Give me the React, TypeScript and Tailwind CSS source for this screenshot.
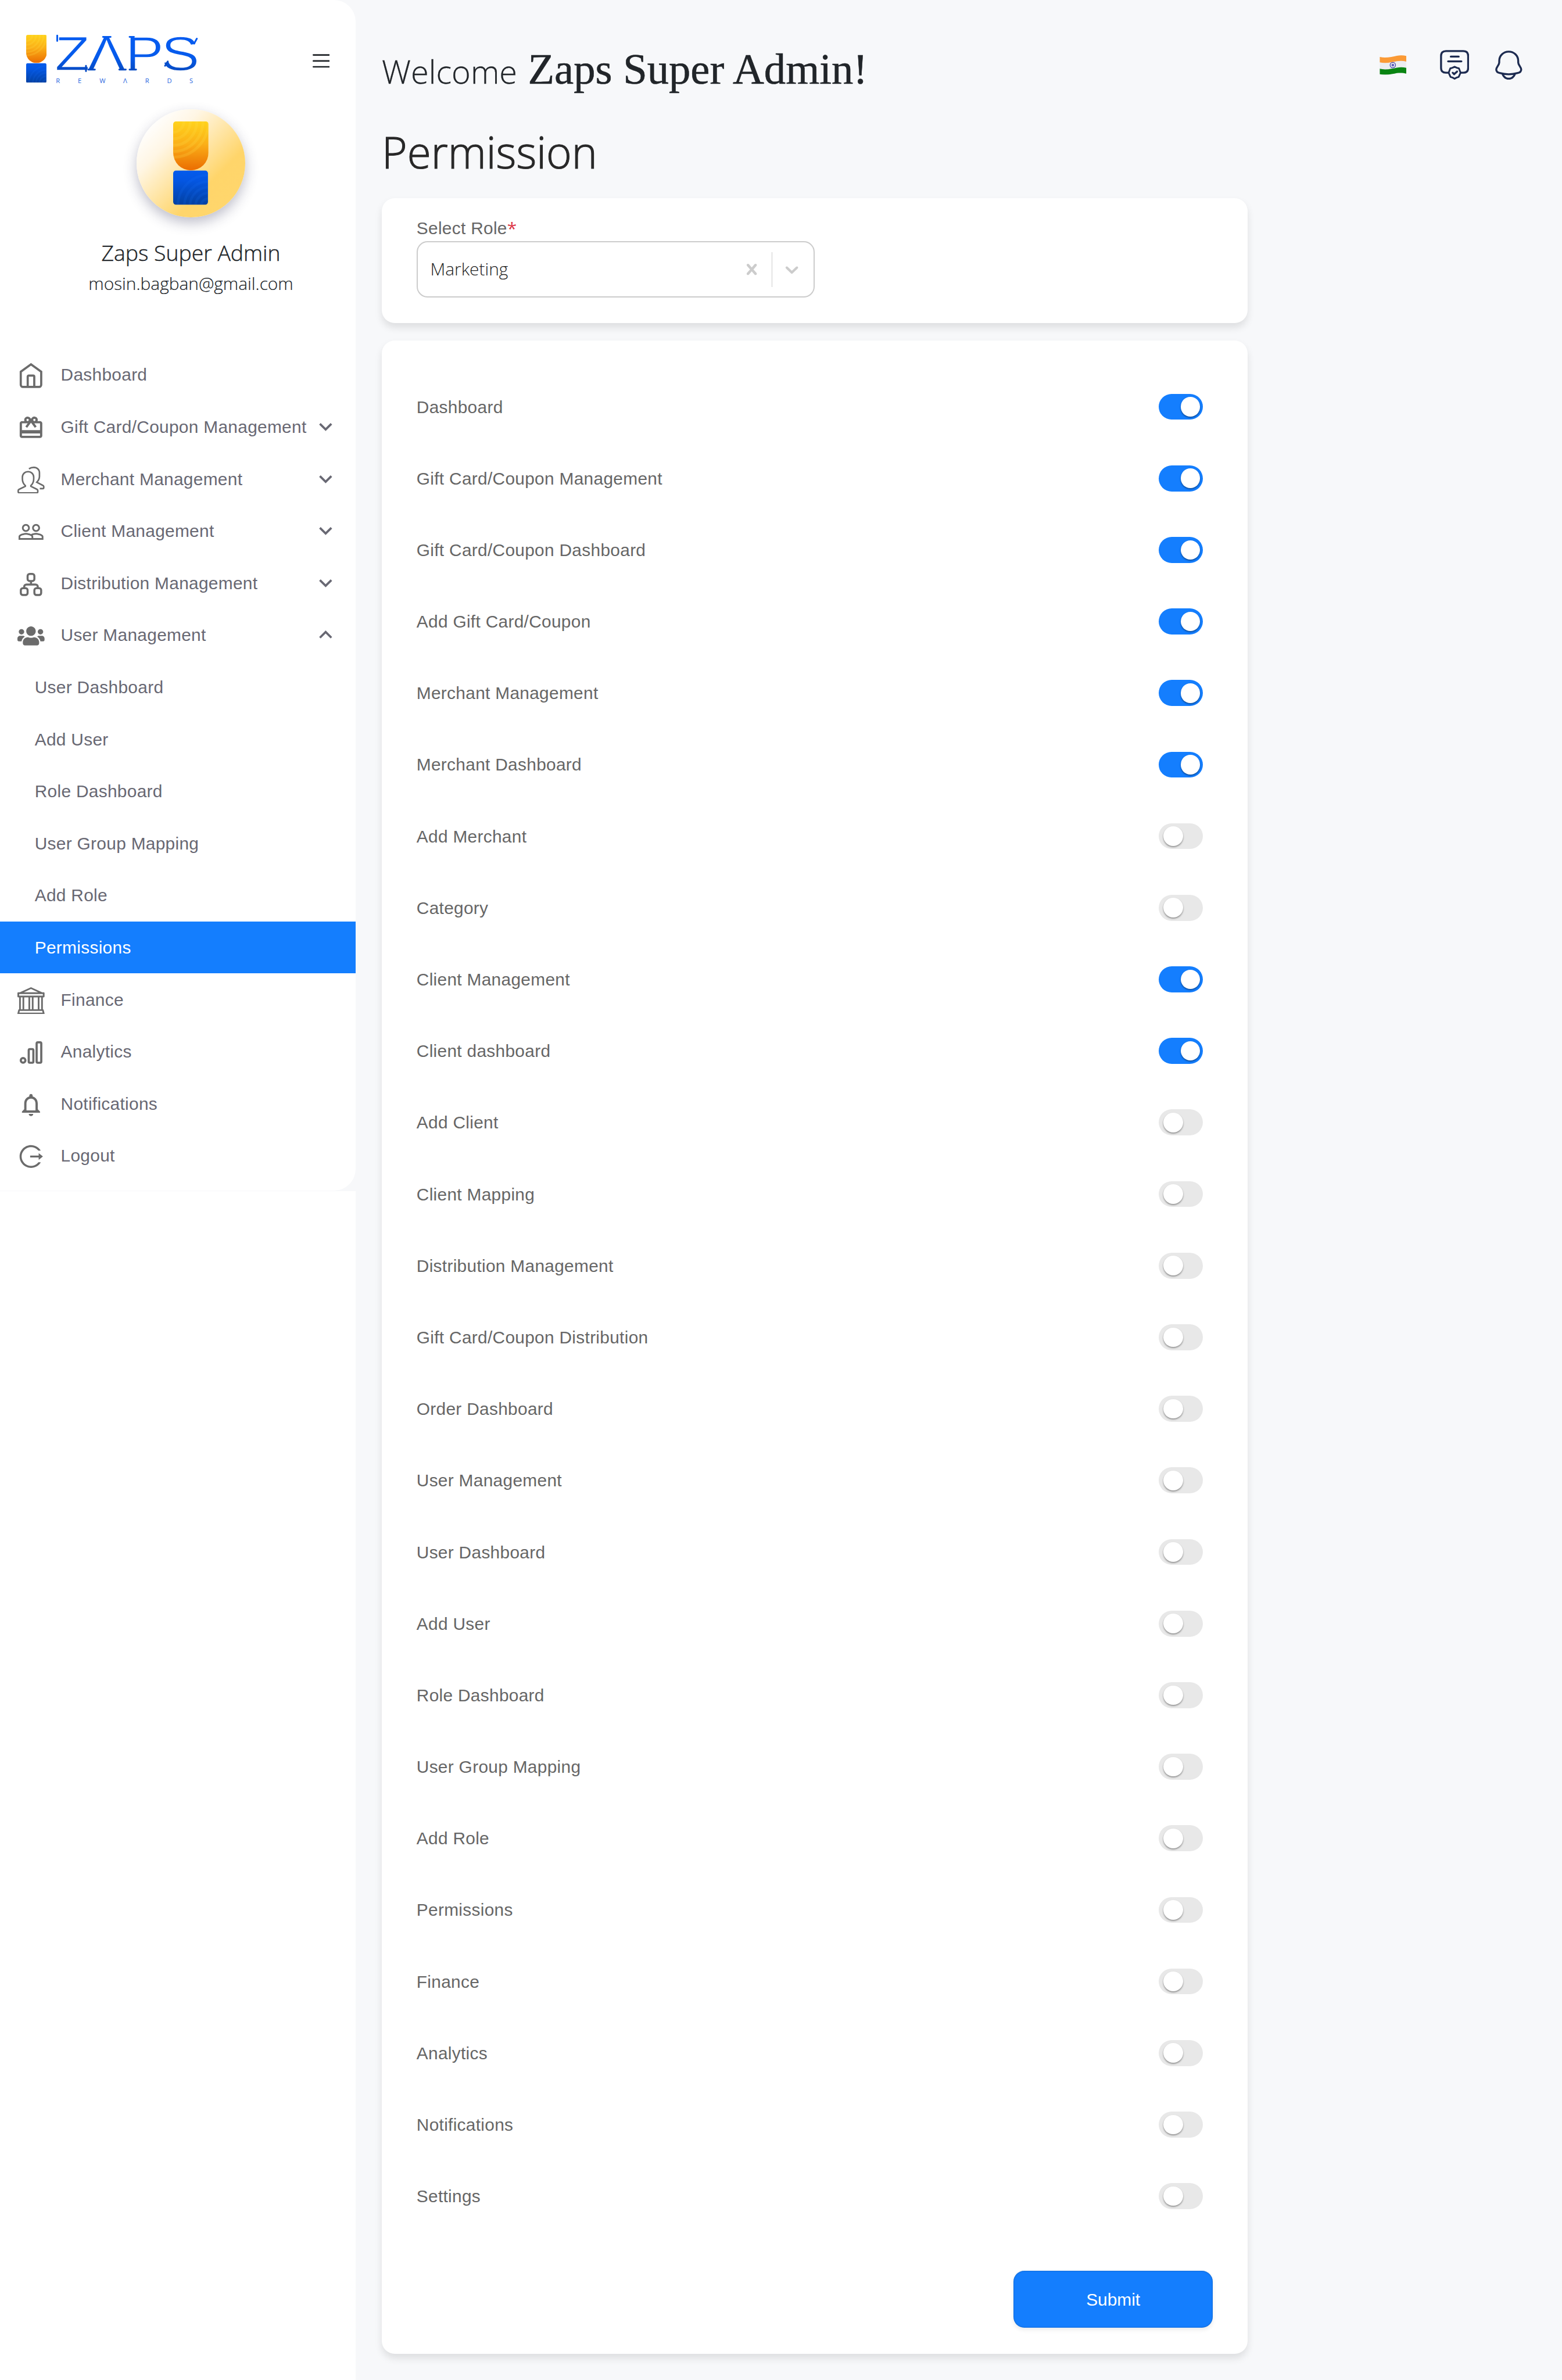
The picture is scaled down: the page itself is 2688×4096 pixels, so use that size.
import React from "react";
import {
  MdCardGiftcard,
  MdPeopleOutline,
  MdNotificationsNone,
  MdKeyboardArrowDown,
  MdKeyboardArrowUp,
} from "react-icons/md";
import { FaUsers } from "react-icons/fa";
import { BsBank } from "react-icons/bs";
import { AiOutlineLogout } from "react-icons/ai";

const HomeIcon = () => (
  <svg viewBox="0 0 24 24" className="size-[25px]" fill="none" stroke="currentColor" strokeWidth="1.9">
    <path d="M12 2.1 21.05 8.6V20.2a1.9 1.9 0 0 1-1.9 1.9H4.85a1.9 1.9 0 0 1-1.9-1.9V8.6Z" />
    <path d="M9.1 22V12.9a.9.9 0 0 1 .9-.9h4a.9.9 0 0 1 .9.9V22" />
  </svg>
);

const MerchantIcon = () => (
  <svg viewBox="0 0 24 24" className="size-[25px]" fill="none" stroke="currentColor" strokeWidth="1.35">
    <path d="M9.4 4.5c-2.9 0-5 2.2-5 4.8V11c0 2.4 1 4.4 2.6 5.8v.6L1.4 20.2a1 1 0 0 0-.7.9v1.4a.8.8 0 0 0 .8.8h15.7a.8.8 0 0 0 .8-.8v-1.4a1 1 0 0 0-.6-.9L11.9 17.4v-.6c1.5-1.4 2.5-3.4 2.5-5.8V9.300c0-2.600-2.100-4.800-5-4.800Z" />
    <path d="M10.2 2c1.2-.9 2.7-1.3 4.3-1.3 2.9 0 5 2.1 5 4.8v3.3c0 2-1 3.700-2.400 5.100l5.500 2.800a1.200 1.200 0 0 1 .7 1v1a.8.8 0 0 1-.8.8h-2.700" />
  </svg>
);

const SitemapIcon = () => (
  <svg viewBox="0 0 24 24" className="size-[25px]" fill="none" stroke="currentColor" strokeWidth="1.8">
    <rect x="9" y="3" width="6" height="6.2" rx="1.8" />
    <rect x="3" y="15.6" width="6" height="6" rx="1.8" />
    <rect x="15" y="15.6" width="6" height="6" rx="1.8" />
    <path d="M12 9.2v3M6 15.6v-1.3a2 2 0 0 1 2-2h8a2 2 0 0 1 2 2v1.3" />
  </svg>
);

const AnalyticsIcon = () => (
  <svg viewBox="0 0 24 24" className="size-[25px]" fill="none" stroke="currentColor" strokeWidth="1.9">
    <circle cx="5" cy="19" r="2.05" />
    <rect x="10" y="9" width="4.1" height="12.1" rx="1" />
    <rect x="17" y="3" width="4.1" height="18.1" rx="1" />
  </svg>
);

/* Brand mark: a rounded amber tile resting on a blue one, both with ripple rings. */
const BrandMark = ({ id, className }: { id: string; className: string }) => (
  <svg viewBox="0 0 38 88.6" preserveAspectRatio="none" className={className}>
    <defs>
      <linearGradient id={`${id}-top`} x1="0" y1="0" x2="0" y2="1">
        <stop offset="0" stopColor="#ffd21c" />
        <stop offset="0.45" stopColor="#fbb018" />
        <stop offset="1" stopColor="#ea6a00" />
      </linearGradient>
      <linearGradient id={`${id}-bottom`} x1="0" y1="0" x2="0" y2="1">
        <stop offset="0" stopColor="#055bec" />
        <stop offset="0.3" stopColor="#0456e2" />
        <stop offset="1" stopColor="#0340a0" />
      </linearGradient>
      <clipPath id={`${id}-ct`}>
        <path d="M3 0h32a3 3 0 0 1 3 3v30a19 19 0 0 1-38 0V3a3 3 0 0 1 3-3Z" />
      </clipPath>
      <clipPath id={`${id}-cb`}>
        <rect x="0" y="52.2" width="37.4" height="36.4" rx="3" />
      </clipPath>
    </defs>
    <g clipPath={`url(#${id}-ct)`}>
      <rect width="38" height="53" fill={`url(#${id}-top)`} />
      <g fill="none" stroke="#ffe14d" strokeOpacity="0.2" strokeWidth="3">
        <circle r="11.5" />
        <circle r="18.5" />
        <circle r="25.5" />
        <circle r="32" />
        <circle r="38" />
      </g>
    </g>
    <g clipPath={`url(#${id}-cb)`}>
      <rect y="52" width="38" height="37" fill={`url(#${id}-bottom)`} />
      <g fill="none" stroke="#1a78ff" strokeOpacity="0.14" strokeWidth="2.8">
        <circle cx="38" cy="90" r="8" />
        <circle cx="38" cy="90" r="14" />
        <circle cx="38" cy="90" r="20" />
        <circle cx="38" cy="90" r="26" />
        <circle cx="38" cy="90" r="33" />
      </g>
    </g>
  </svg>
);

const Logo = () => (
  <div className="flex h-[45px] gap-[9px]">
    <BrandMark id="logo" className="h-[44.3px] w-[19px]" />
    <svg viewBox="0 0 132 45" className="h-[45px] w-[132px] overflow-visible">
      <defs>
        <linearGradient id="word" gradientUnits="userSpaceOnUse" x1="0" y1="-31" x2="0" y2="0">
          <stop offset="0" stopColor="#055bf0" />
          <stop offset="0.6" stopColor="#055bec" />
          <stop offset="1" stopColor="#064bc4" />
        </linearGradient>
      </defs>
      {/* The white outline thins the strokes of the wordmark. */}
      <text
        transform="translate(0 32.8) scale(1.2 1)"
        x="-1.2 23.8 53 80.5"
        fontSize="44.2"
        fontFamily="'Liberation Sans', Arial, sans-serif"
        fill="url(#word)"
        stroke="#ffffff"
        strokeWidth="0.7"
      >
        ZΛPS
      </text>
      {/* Flared terminals of the wordmark. */}
      <g fill="none" strokeWidth="1.6" strokeLinecap="round">
        <path stroke="#055bf0" d="M.8.6v5M43 1.9h7M67.5 1.9h4M129.5 3.5 127 8" />
        <path stroke="#064bc4" d="M27.300 28.500v5M29.500 32h6M58 32h6M67.500 32h6M100.200 28.500l2.500-4" />
      </g>
      <text
        x="-0.4 19.8 39.8 61.6 81.9 102.1 122.7"
        y="44.2"
        fontSize="6"
        fontFamily="'Open Sans', sans-serif"
        fill="#2a67e0"
      >
        REWΛRDS
      </text>
    </svg>
  </div>
);

const FlagIndia = () => (
  <svg viewBox="0 0 50 36" className="h-[18px] w-[25px]">
    <defs>
      <clipPath id="flag">
        <path d="M0.5 3.2C12 6 24 2.5 32 1C38 0 44 0 49.5 1.5V34C44 32.3 38 32.3 32 33C24 34.5 12 38 0.5 35Z" />
      </clipPath>
    </defs>
    <g clipPath="url(#flag)">
      <rect width="50" height="36" fill="#ececf0" />
      <path d="M0 0H50V12C44 10 38 10 32 11C24 12.5 12 16 0 13Z" fill="#fb9a35" />
      <path d="M0 25C12 28 24 24.5 32 23C38 22 44 22 50 23.5V36H0Z" fill="#0a8412" />
    </g>
    <circle cx="24.5" cy="18.3" r="5" fill="none" stroke="#3a37a8" strokeWidth="1.3" />
    <circle cx="24.5" cy="18.3" r="2.6" fill="#3a37a8" fillOpacity="0.75" />
  </svg>
);

const CertificateIcon = () => (
  <svg viewBox="0 0 54 55" className="h-[27.5px] w-[27px]" fill="none" stroke="currentColor" strokeWidth="3.6" strokeLinecap="round" strokeLinejoin="round">
    <path d="M14.5 42H11c-6 0-9-2.8-9-9V11c0-6.2 3-9 9-9h32c6 0 9 2.8 9 9v22c0 6.2-3 9-9 9h-4" />
    <path d="M20 12.2h14.5M15 21h24.5" />
    <path d="m27 31 4 1.8 4 1.2 1.5 4 1.5 4-1.8 4-1.7 3.6-4 1.4-3.5 2-3.5-2-4-1.4-1.7-3.6L16 42l1.5-4 1.5-4 4-1.200Z" strokeWidth="3.2" />
    <path d="m23.5 42 2.5 2.6 5.5-4.8" />
  </svg>
);

const BellIcon = () => (
  <svg viewBox="0 0 50 54" className="h-[27px] w-[25px]" fill="none" stroke="currentColor" strokeWidth="3.6" strokeLinecap="round" strokeLinejoin="round">
    <path d="M25 2C15 2 7.5 9.7 7.5 19v3c0 4.5-5.5 8.5-5.5 13 0 4 3 5.6 6.5 6.5 10.5 2.9 22.5 2.9 33 0C45 40.6 48 39 48 35c0-4.500-5.500-8.500-5.500-13v-3C42.500 9.700 35 2 25 2Z" />
    <path d="M14 44.500c2.500 5 6.500 7.500 11 7.500s8.500-2.500 11-7.500" />
  </svg>
);

type NavEntry = { label: string; icon: React.ReactNode; arrow?: "down" | "up" };

const topNav: NavEntry[] = [
  { label: "Dashboard", icon: <HomeIcon /> },
  { label: "Gift Card/Coupon Management", icon: <MdCardGiftcard size={25} />, arrow: "down" },
  { label: "Merchant Management", icon: <MerchantIcon />, arrow: "down" },
  { label: "Client Management", icon: <MdPeopleOutline size={25} />, arrow: "down" },
  { label: "Distribution Management", icon: <SitemapIcon />, arrow: "down" },
  { label: "User Management", icon: <FaUsers size={25} />, arrow: "up" },
];

const subNav = ["User Dashboard", "Add User", "Role Dashboard", "User Group Mapping", "Add Role", "Permissions"];

const bottomNav: NavEntry[] = [
  { label: "Finance", icon: <BsBank size={25} /> },
  { label: "Analytics", icon: <AnalyticsIcon /> },
  { label: "Notifications", icon: <MdNotificationsNone size={25} /> },
  { label: "Logout", icon: <AiOutlineLogout size={25} /> },
];

const permissions: [string, boolean][] = [
  ["Dashboard", true],
  ["Gift Card/Coupon Management", true],
  ["Gift Card/Coupon Dashboard", true],
  ["Add Gift Card/Coupon", true],
  ["Merchant Management", true],
  ["Merchant Dashboard", true],
  ["Add Merchant", false],
  ["Category", false],
  ["Client Management", true],
  ["Client dashboard", true],
  ["Add Client", false],
  ["Client Mapping", false],
  ["Distribution Management", false],
  ["Gift Card/Coupon Distribution", false],
  ["Order Dashboard", false],
  ["User Management", false],
  ["User Dashboard", false],
  ["Add User", false],
  ["Role Dashboard", false],
  ["User Group Mapping", false],
  ["Add Role", false],
  ["Permissions", false],
  ["Finance", false],
  ["Analytics", false],
  ["Notifications", false],
  ["Settings", false],
];

const NavRow = ({ label, icon, arrow }: NavEntry) => (
  <li className="flex h-12 items-center pr-4 pl-4">
    <span className="mt-0.5 flex w-10 text-[#6b6b6b]">{icon}</span>
    <span className="grow pt-px whitespace-nowrap">{label}</span>
    {arrow === "down" && <MdKeyboardArrowDown size={24} />}
    {arrow === "up" && <MdKeyboardArrowUp size={24} />}
  </li>
);

const Toggle = ({ on }: { on: boolean }) => (
  <button
    role="switch"
    aria-checked={on}
    className={
      on
        ? "flex h-6 w-[41px] items-center justify-end rounded-full bg-[#147efe] pr-[2.5px]"
        : "flex h-6 w-[41px] items-center justify-start rounded-full bg-[#e8e8e8] pl-[4.5px]"
    }
  >
    <span className="size-[18px] rounded-full bg-white shadow-[0_1px_1.5px_rgba(0,0,0,0.4)]" />
  </button>
);

const Sidebar = () => (
  <div className="w-[328px] shrink-0 bg-white">
    <div className="h-[1098px] bg-[#f7f8fa]">
      <aside className="flex h-[1097.5px] flex-col rounded-r-[20px] bg-white">
        <div className="flex h-[100.5px] items-start justify-between pt-8 pr-6 pl-6">
          <Logo />
          <svg viewBox="0 0 16 14" className="mt-[17.5px] h-[14px] w-4" stroke="#212529" strokeWidth="1.4" strokeLinecap="round">
            <path d="M.7 1.4h14.6M.7 6.9h14.6M.7 12.3h14.6" />
          </svg>
        </div>
        <div className="flex h-[221px] flex-col items-center pl-6 font-['Open_Sans',sans-serif] font-light text-[#212529]">
          <div className="flex size-[100px] items-center justify-center rounded-full bg-linear-[135deg,#ffffff_12%,#fff6e4_30%,#ffd56a_68%,#ffd76e_100%] shadow-[0_5px_12px_rgba(40,40,80,0.3)]">
            <BrandMark id="avatar" className="h-[76.8px] w-[32.6px]" />
          </div>
          <p className="mt-[17.8px] text-xl leading-[30px] [-webkit-text-stroke:0.25px]">Zaps Super Admin</p>
          <p className="text-base leading-[27px] [-webkit-text-stroke:0.1px]">mosin.bagban@gmail.com</p>
        </div>
        <ul className="text-base tracking-[0.01em] text-[#686873]">
          {topNav.map((n) => (
            <NavRow key={n.label} {...n} />
          ))}
          {subNav.map((label) => (
            <li
              key={label}
              className={
                label === "Permissions"
                  ? "flex h-12 items-center bg-[#147efe] pt-px pl-8 text-white"
                  : "flex h-12 items-center pt-px pl-8"
              }
            >
              {label}
            </li>
          ))}
          {bottomNav.map((n) => (
            <NavRow key={n.label} {...n} />
          ))}
        </ul>
      </aside>
    </div>
  </div>
);

const RoleSelect = () => (
  <div className="flex h-[52px] w-[367px] items-center rounded-[10px] border-[1.1px] border-[#cccccc] bg-white pr-[1.7px] pl-[11.6px] font-['Open_Sans',sans-serif] font-light text-[#222]">
    <span className="grow">Marketing</span>
    <span className="flex w-9 justify-center text-[#cccccc]">
      <svg viewBox="0 0 20 20" className="size-5" fill="currentColor">
        <path d="M14.348 14.849c-0.469 0.469-1.229 0.469-1.697 0l-2.651-3.030-2.651 3.029c-0.469 0.469-1.229 0.469-1.697 0-0.469-0.469-0.469-1.229 0-1.697l2.758-3.15-2.759-3.152c-0.469-0.469-0.469-1.228 0-1.697s1.228-0.469 1.697 0l2.652 3.031 2.651-3.031c0.469-0.469 1.228-0.469 1.697 0s0.469 1.229 0 1.697l-2.758 3.152 2.758 3.15c0.469 0.469 0.469 1.229 0 1.698z" />
      </svg>
    </span>
    <span className="h-8 w-px bg-[#cccccc]" />
    <span className="flex w-9 justify-center text-[#cccccc]">
      <svg viewBox="0 0 20 20" className="size-5" fill="currentColor">
        <path d="M4.516 7.548c0.436-0.446 1.043-0.481 1.576 0l3.908 3.747 3.908-3.747c0.533-0.481 1.141-0.446 1.574 0 0.436 0.445 0.408 1.197 0 1.615-0.406 0.418-4.695 4.502-4.695 4.502-0.217 0.223-0.502 0.335-0.787 0.335s-0.57-0.112-0.789-0.335c0 0-4.287-4.084-4.695-4.502s-0.436-1.17 0-1.615z" />
      </svg>
    </span>
  </div>
);

export default function App() {
  return (
    <div className="flex h-[2194.3px] w-[1440px] overflow-hidden bg-[#f7f8fa] font-['Liberation_Sans',Arial,sans-serif] text-base [zoom:1.8666667]">
      <Sidebar />
      <main className="flex grow flex-col pl-6">
        <header className="flex h-[120px] items-center justify-between pr-[36.5px]">
          <h1 className="mt-[7px] flex items-baseline whitespace-pre text-[#212529]">
            <span className="font-['Open_Sans',sans-serif] text-[30px] font-light [-webkit-text-stroke:0.15px]">Welcome </span>
            <span className="ml-[2px] font-['Liberation_Serif',serif] text-[40px] [-webkit-text-stroke:0.3px]">Zaps Super Admin!</span>
          </h1>
          <div className="flex items-center text-[#1d2b50]">
            <FlagIndia />
            <span className="ml-[31px]">
              <CertificateIcon />
            </span>
            <span className="ml-6">
              <BellIcon />
            </span>
          </div>
        </header>
        <h2 className="h-[62.5px] font-['Open_Sans',sans-serif] text-[40px] leading-[40px] font-light text-[#282828] [-webkit-text-stroke:0.6px]">
          Permission
        </h2>
        <section className="h-[115.5px] w-[798px] rounded-xl bg-white px-8 pt-4 shadow-[0_4px_7px_rgba(0,0,0,0.1)]">
          <label className="flex h-6 items-center text-[#666666]">
            <span className="tracking-[0.01em]">Select Role</span>
            <span className="font-['Open_Sans',sans-serif] text-[#dc3545]">*</span>
          </label>
          <RoleSelect />
        </section>
        <section className="mt-4 h-[1856px] w-[798px] rounded-xl bg-white pt-7 pl-8 shadow-[0_4px_7px_rgba(0,0,0,0.1)]">
          <ul className="pr-[41px] tracking-[0.01em] text-[#666666]">
            {permissions.map(([label, on]) => (
              <li key={label} className="flex h-[66px] items-center justify-between">
                <span className="pt-px">{label}</span>
                <Toggle on={on} />
              </li>
            ))}
          </ul>
          <div className="mt-9 flex justify-end pr-8">
            <button className="h-[52px] w-[183.5px] rounded-[10px] bg-[#147efe] pt-px text-white shadow-[0_2px_4px_rgba(0,0,0,0.08),inset_0_0_1.5px_rgba(0,0,0,0.3)]">
              Submit
            </button>
          </div>
        </section>
      </main>
    </div>
  );
}
